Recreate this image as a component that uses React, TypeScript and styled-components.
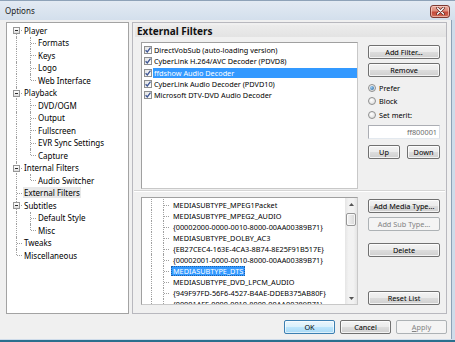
import React from 'react';
import styled, { createGlobalStyle, css } from 'styled-components';

const GlobalStyle = createGlobalStyle`
  html, body { margin: 0; padding: 0; background: #f0f0f0; }
  body { font-family: "Noto Sans", "Open Sans", sans-serif; font-size: 8px; color: #000; }
  * { box-sizing: border-box; }
`;

const Window = styled.div`
  width: 455px;
  height: 342px;
  display: flex;
  flex-direction: column;
  background: #cfdcea;
  border-bottom: 2px solid #2a6f8e;
  overflow: hidden;
`;

const TitleBar = styled.div`
  height: 20px;
  flex: none;
  display: flex;
  align-items: center;
  justify-content: space-between;
  padding: 0 5px 0 5px;
  background: linear-gradient(#e3eaf3, #d3dfec);
  border-top: 1px solid #8ea2b8;
`;

const TitleText = styled.span`
  font-size: 8px;
  color: #1a1a1a;
`;

const CloseButton = styled.span`
  width: 20px;
  height: 13px;
  margin-top: 1px;
  border: 1px solid #7d3a33;
  border-radius: 3px;
  background: linear-gradient(#e9a99c 0%, #dd8c7c 45%, #c5493a 55%, #cf6a55 100%);
  display: flex;
  align-items: center;
  justify-content: center;
  box-shadow: inset 0 0 0 1px rgba(255, 220, 210, 0.6);
`;

const Client = styled.div`
  flex: 1;
  display: flex;
  flex-direction: column;
  background: #f0f0f0;
  padding: 2px 4px 0 6px;
  margin-right: 3px;
  margin-bottom: 1px;
  border-right: 1px solid #8da2b7;
`;

const Main = styled.div`
  height: 292px;
  display: flex;
  gap: 3px;
`;

const TreePanel = styled.div`
  width: 123px;
  height: 100%;
  background: #fff;
  border: 1px solid #a3a3a3;
  padding: 1px 0 0 3px;
  display: flex;
  flex-direction: column;
`;

const TreeRow = styled.div`
  height: 12.5px;
  display: flex;
  align-items: center;
`;

type LineKind = 'full' | 'top' | 'bottom' | 'none';

const Guide = styled.span<{ $line: LineKind; $stub?: boolean; $w?: number }>`
  position: relative;
  flex: none;
  width: ${p => p.$w ?? 12}px;
  height: 100%;
  &::before {
    content: '';
    position: absolute;
    left: 6px;
    border-left: 1px dotted #a0a0a0;
    display: ${p => (p.$line === 'none' ? 'none' : 'block')};
    top: ${p => (p.$line === 'bottom' ? '50%' : '0')};
    bottom: ${p => (p.$line === 'top' ? '50%' : '0')};
  }
  &::after {
    content: '';
    position: absolute;
    left: 7px;
    right: 0;
    top: 50%;
    border-top: 1px dotted #a0a0a0;
    display: ${p => (p.$stub ? 'block' : 'none')};
  }
`;

const Expander = styled.span`
  position: absolute;
  z-index: 1;
  left: 3px;
  top: calc(50% - 3px);
  width: 7px;
  height: 7px;
  border: 1px solid #969696;
  background: linear-gradient(#ffffff, #dedede);
  display: flex;
  align-items: center;
  justify-content: center;
  &::after {
    content: '';
    width: 3px;
    height: 1px;
    background: #2b2b2b;
  }
`;

const TreeLabel = styled.span<{ $selected?: boolean }>`
  margin-left: 1px;
  padding: 0 1px;
  height: 11px;
  line-height: 11px;
  white-space: nowrap;
  font-size: 8px;
  color: #000;
  ${p =>
    p.$selected &&
    css`
      background: #e8e8e8;
    `}
`;

const Page = styled.div`
  flex: 1;
  height: 100%;
  border: 1px solid #b8b8be;
  display: flex;
  flex-direction: column;
`;

const Header = styled.div`
  height: 12px;
  margin: 2px 0 0 2px;
  padding-left: 2px;
  background: linear-gradient(#ececec, #e3e3e3);
  font-weight: 700;
  font-size: 10px;
  line-height: 12px;
  color: #111;
  white-space: nowrap;
`;

const Section = styled.div<{ $top: number }>`
  display: flex;
  padding-left: 8px;
  margin-top: ${p => p.$top}px;
`;

const ListBox = styled.div<{ $h: number }>`
  width: 217px;
  height: ${p => p.$h}px;
  background: #fff;
  border: 1px solid #a0a0a0;
  border-right-color: #c8c8c8;
  border-bottom-color: #c8c8c8;
  display: flex;
  overflow: hidden;
`;

const ListRows = styled.div<{ $pt: number; $pl?: number }>`
  flex: 1;
  display: flex;
  flex-direction: column;
  padding-top: ${p => p.$pt}px;
  padding-left: ${p => p.$pl ?? 0}px;
  overflow: hidden;
`;

const FilterRow = styled.div`
  height: 11.25px;
  flex: none;
  display: flex;
  align-items: center;
`;

const CheckBox = styled.span`
  width: 8px;
  height: 8px;
  flex: none;
  margin-left: 2px;
  border: 1px solid #8e8f8f;
  background: linear-gradient(135deg, #e4e4e4, #ffffff);
  display: flex;
  align-items: center;
  justify-content: center;
`;

const FilterLabel = styled.span<{ $selected?: boolean }>`
  flex: 1;
  height: 10px;
  line-height: 10px;
  margin-left: 1px;
  padding-left: 1px;
  font-size: 7.3px;
  white-space: nowrap;
  color: ${p => (p.$selected ? '#fff' : '#000')};
  background: ${p => (p.$selected ? '#3399ff' : 'transparent')};
`;

const SideCol = styled.div<{ $pt: number }>`
  width: 72px;
  margin-left: 10px;
  padding-top: ${p => p.$pt}px;
  display: flex;
  flex-direction: column;
`;

const Button = styled.button<{ $variant?: 'default' | 'disabled'; $mt?: number; $w?: number }>`
  flex: none;
  width: ${p => (p.$w ? `${p.$w}px` : '100%')};
  height: 14px;
  margin: ${p => p.$mt ?? 0}px 0 0 0;
  padding: 0;
  font-family: inherit;
  font-size: 7.3px;
  line-height: 12px;
  color: #000;
  border: 1px solid #707070;
  border-radius: 2px;
  background: linear-gradient(#f3f3f3 0%, #ebebeb 50%, #dddddd 50%, #cfcfcf 100%);
  box-shadow: inset 0 0 0 1px rgba(255, 255, 255, 0.75);
  white-space: nowrap;
  ${p =>
    p.$variant === 'default' &&
    css`
      border-color: #3c7fb1;
      background: linear-gradient(#eaf6fd 0%, #d9f0fc 50%, #bee6fd 50%, #a7d9f5 100%);
      box-shadow: inset 0 0 0 1px rgba(255, 255, 255, 0.6);
    `}
  ${p =>
    p.$variant === 'disabled' &&
    css`
      border-color: #adb2b5;
      background: #f4f4f4;
      color: #838383;
      box-shadow: none;
    `}
`;

const RadioRow = styled.label<{ $mt?: number }>`
  height: 13.5px;
  margin-top: ${p => p.$mt ?? 0}px;
  display: flex;
  align-items: center;
  gap: 3px;
  font-size: 7.3px;
  white-space: nowrap;
`;

const Radio = styled.span<{ $checked?: boolean }>`
  width: 8px;
  height: 8px;
  flex: none;
  border-radius: 50%;
  border: 1px solid #8e8f8f;
  background: radial-gradient(circle at 40% 35%, #ffffff, #d6d6d6);
  display: flex;
  align-items: center;
  justify-content: center;
  &::after {
    content: '';
    width: 4px;
    height: 4px;
    border-radius: 50%;
    background: radial-gradient(circle at 35% 35%, #9fd0f5, #1b5b97);
    display: ${p => (p.$checked ? 'block' : 'none')};
  }
`;

const MeritInput = styled.div`
  height: 14px;
  margin-top: 3px;
  border: 1px solid #abadb3;
  border-right-color: #dbdfe6;
  border-bottom-color: #e3e9ef;
  background: #fff;
  color: #6d6d6d;
  font-size: 7.3px;
  line-height: 12px;
  text-align: right;
  padding-right: 2px;
`;

const ButtonPair = styled.div`
  display: flex;
  justify-content: space-between;
  margin-top: 6px;
`;

const Separator = styled.div`
  height: 2px;
  margin: 1px 1px 0 1px;
  border-top: 1px solid #d5d5d5;
  border-bottom: 1px solid #ffffff;
`;

const TypeRow = styled.div`
  height: 11.1px;
  flex: none;
  display: flex;
  align-items: center;
`;

const TypeLabel = styled.span<{ $selected?: boolean }>`
  margin-left: 2px;
  height: 10px;
  line-height: 8px;
  padding: 0 1px;
  font-size: 7.3px;
  white-space: nowrap;
  border: 1px dotted transparent;
  ${p =>
    p.$selected &&
    css`
      background: #3399ff;
      color: #fff;
      border-color: #1d5fa8;
    `}
`;

const ScrollBar = styled.div`
  width: 12px;
  flex: none;
  display: flex;
  flex-direction: column;
  background: linear-gradient(90deg, #e5e5e5, #f2f2f2 30%, #f2f2f2 70%, #e5e5e5);
`;

const ScrollArrow = styled.div`
  height: 12px;
  display: flex;
  align-items: center;
  justify-content: center;
`;

const ScrollTrack = styled.div`
  flex: 1;
  padding: 3px 0 0 1px;
`;

const Thumb = styled.div`
  width: 10px;
  height: 13px;
  border: 1px solid #979797;
  border-radius: 2px;
  background: linear-gradient(90deg, #f4f4f4, #e6e6e6 50%, #d8d8d8);
  box-shadow: inset 0 0 0 1px rgba(255, 255, 255, 0.7);
`;

const Footer = styled.div`
  display: flex;
  justify-content: flex-end;
  gap: 5px;
  margin-top: 6px;
`;

const treeData: { label: string; children?: string[]; selected?: boolean }[] = [
  { label: 'Player', children: ['Formats', 'Keys', 'Logo', 'Web Interface'] },
  { label: 'Playback', children: ['DVD/OGM', 'Output', 'Fullscreen', 'EVR Sync Settings', 'Capture'] },
  { label: 'Internal Filters', children: ['Audio Switcher'] },
  { label: 'External Filters', selected: true },
  { label: 'Subtitles', children: ['Default Style', 'Misc'] },
  { label: 'Tweaks' },
  { label: 'Miscellaneous' },
];

const filters = [
  { label: 'DirectVobSub (auto-loading version)' },
  { label: 'CyberLink H.264/AVC Decoder (PDVD8)' },
  { label: 'ffdshow Audio Decoder', selected: true },
  { label: 'CyberLink Audio Decoder (PDVD10)' },
  { label: 'Microsoft DTV-DVD Audio Decoder' },
];

const mediaTypes = [
  'MEDIASUBTYPE_MPEG1Packet',
  'MEDIASUBTYPE_MPEG2_AUDIO',
  '{00002000-0000-0010-8000-00AA00389B71}',
  'MEDIASUBTYPE_DOLBY_AC3',
  '{EB27CEC4-163E-4CA3-8B74-8E25F91B517E}',
  '{00002001-0000-0010-8000-00AA00389B71}',
  'MEDIASUBTYPE_DTS',
  'MEDIASUBTYPE_DVD_LPCM_AUDIO',
  '{949F97FD-56F6-4527-B4AE-DDEB375AB80F}',
  '{00001AFF-0000-0010-8000-00AA00389B71}',
];

const CheckMark = () => (
  <svg width="6" height="6" viewBox="0 0 6 6">
    <path d="M0.6 3.2 L2.3 5 L5.5 0.6" fill="none" stroke="#3e5694" strokeWidth="1.3" />
  </svg>
);

const CloseGlyph = () => (
  <svg width="9" height="8" viewBox="0 0 9 8">
    <path d="M1.5 1 L7.5 7 M7.5 1 L1.5 7" stroke="#5a2420" strokeWidth="2.6" strokeLinecap="round" />
    <path d="M1.5 1 L7.5 7 M7.5 1 L1.5 7" stroke="#ffffff" strokeWidth="1.4" strokeLinecap="round" />
  </svg>
);

const Arrow = ({ up }: { up?: boolean }) => (
  <svg width="5" height="3" viewBox="0 0 5 3">
    <path d={up ? 'M0 3 L2.5 0 L5 3 Z' : 'M0 0 L5 0 L2.5 3 Z'} fill="#555" />
  </svg>
);

function Tree() {
  const rows: React.ReactNode[] = [];
  treeData.forEach((node, i) => {
    const isLast = i === treeData.length - 1;
    const rootLine: LineKind = i === 0 ? 'bottom' : isLast ? 'top' : 'full';
    rows.push(
      <TreeRow key={node.label}>
        <Guide $line={rootLine} $stub>
          {node.children && <Expander />}
        </Guide>
        <TreeLabel $selected={node.selected}>{node.label}</TreeLabel>
      </TreeRow>
    );
    node.children?.forEach((child, j) => {
      const lastChild = j === node.children!.length - 1;
      rows.push(
        <TreeRow key={node.label + child}>
          <Guide $line={isLast ? 'none' : 'full'} $w={14} />
          <Guide $line={lastChild ? 'top' : 'full'} $stub />
          <TreeLabel>{child}</TreeLabel>
        </TreeRow>
      );
    });
  });
  return <TreePanel>{rows}</TreePanel>;
}

export default function App() {
  return (
    <>
      <GlobalStyle />
      <Window>
        <TitleBar>
          <TitleText>Options</TitleText>
          <CloseButton>
            <CloseGlyph />
          </CloseButton>
        </TitleBar>
        <Client>
          <Main>
            <Tree />
            <Page>
              <Header>External Filters</Header>
              <Section $top={5}>
                <ListBox $h={147}>
                  <ListRows $pt={1.5}>
                    {filters.map(f => (
                      <FilterRow key={f.label}>
                        <CheckBox>
                          <CheckMark />
                        </CheckBox>
                        <FilterLabel $selected={f.selected}>{f.label}</FilterLabel>
                      </FilterRow>
                    ))}
                  </ListRows>
                </ListBox>
                <SideCol $pt={3}>
                  <Button>Add Filter...</Button>
                  <Button $mt={4}>Remove</Button>
                  <RadioRow $mt={4}>
                    <Radio $checked />
                    Prefer
                  </RadioRow>
                  <RadioRow>
                    <Radio />
                    Block
                  </RadioRow>
                  <RadioRow>
                    <Radio />
                    Set merit:
                  </RadioRow>
                  <MeritInput>ff800001</MeritInput>
                  <ButtonPair>
                    <Button $w={32}>Up</Button>
                    <Button $w={33}>Down</Button>
                  </ButtonPair>
                </SideCol>
              </Section>
              <Separator />
              <Section $top={5}>
                <ListBox $h={108}>
                  <ListRows $pt={1} $pl={3}>
                    {mediaTypes.map(t => (
                      <TypeRow key={t}>
                        <Guide $line="full" />
                        <Guide $line="full" $stub />
                        <TypeLabel $selected={t === 'MEDIASUBTYPE_DTS'}>{t}</TypeLabel>
                      </TypeRow>
                    ))}
                  </ListRows>
                  <ScrollBar>
                    <ScrollArrow>
                      <Arrow up />
                    </ScrollArrow>
                    <ScrollTrack>
                      <Thumb />
                    </ScrollTrack>
                    <ScrollArrow>
                      <Arrow />
                    </ScrollArrow>
                  </ScrollBar>
                </ListBox>
                <SideCol $pt={2}>
                  <Button>Add Media Type...</Button>
                  <Button $mt={4} $variant="disabled">Add Sub Type...</Button>
                  <Button $mt={12}>Delete</Button>
                  <Button $mt={34}>Reset List</Button>
                </SideCol>
              </Section>
            </Page>
          </Main>
          <Footer>
            <Button $w={51} $variant="default">OK</Button>
            <Button $w={51}>Cancel</Button>
            <Button $w={51} $variant="disabled">
              <u>A</u>pply
            </Button>
          </Footer>
        </Client>
      </Window>
    </>
  );
}
